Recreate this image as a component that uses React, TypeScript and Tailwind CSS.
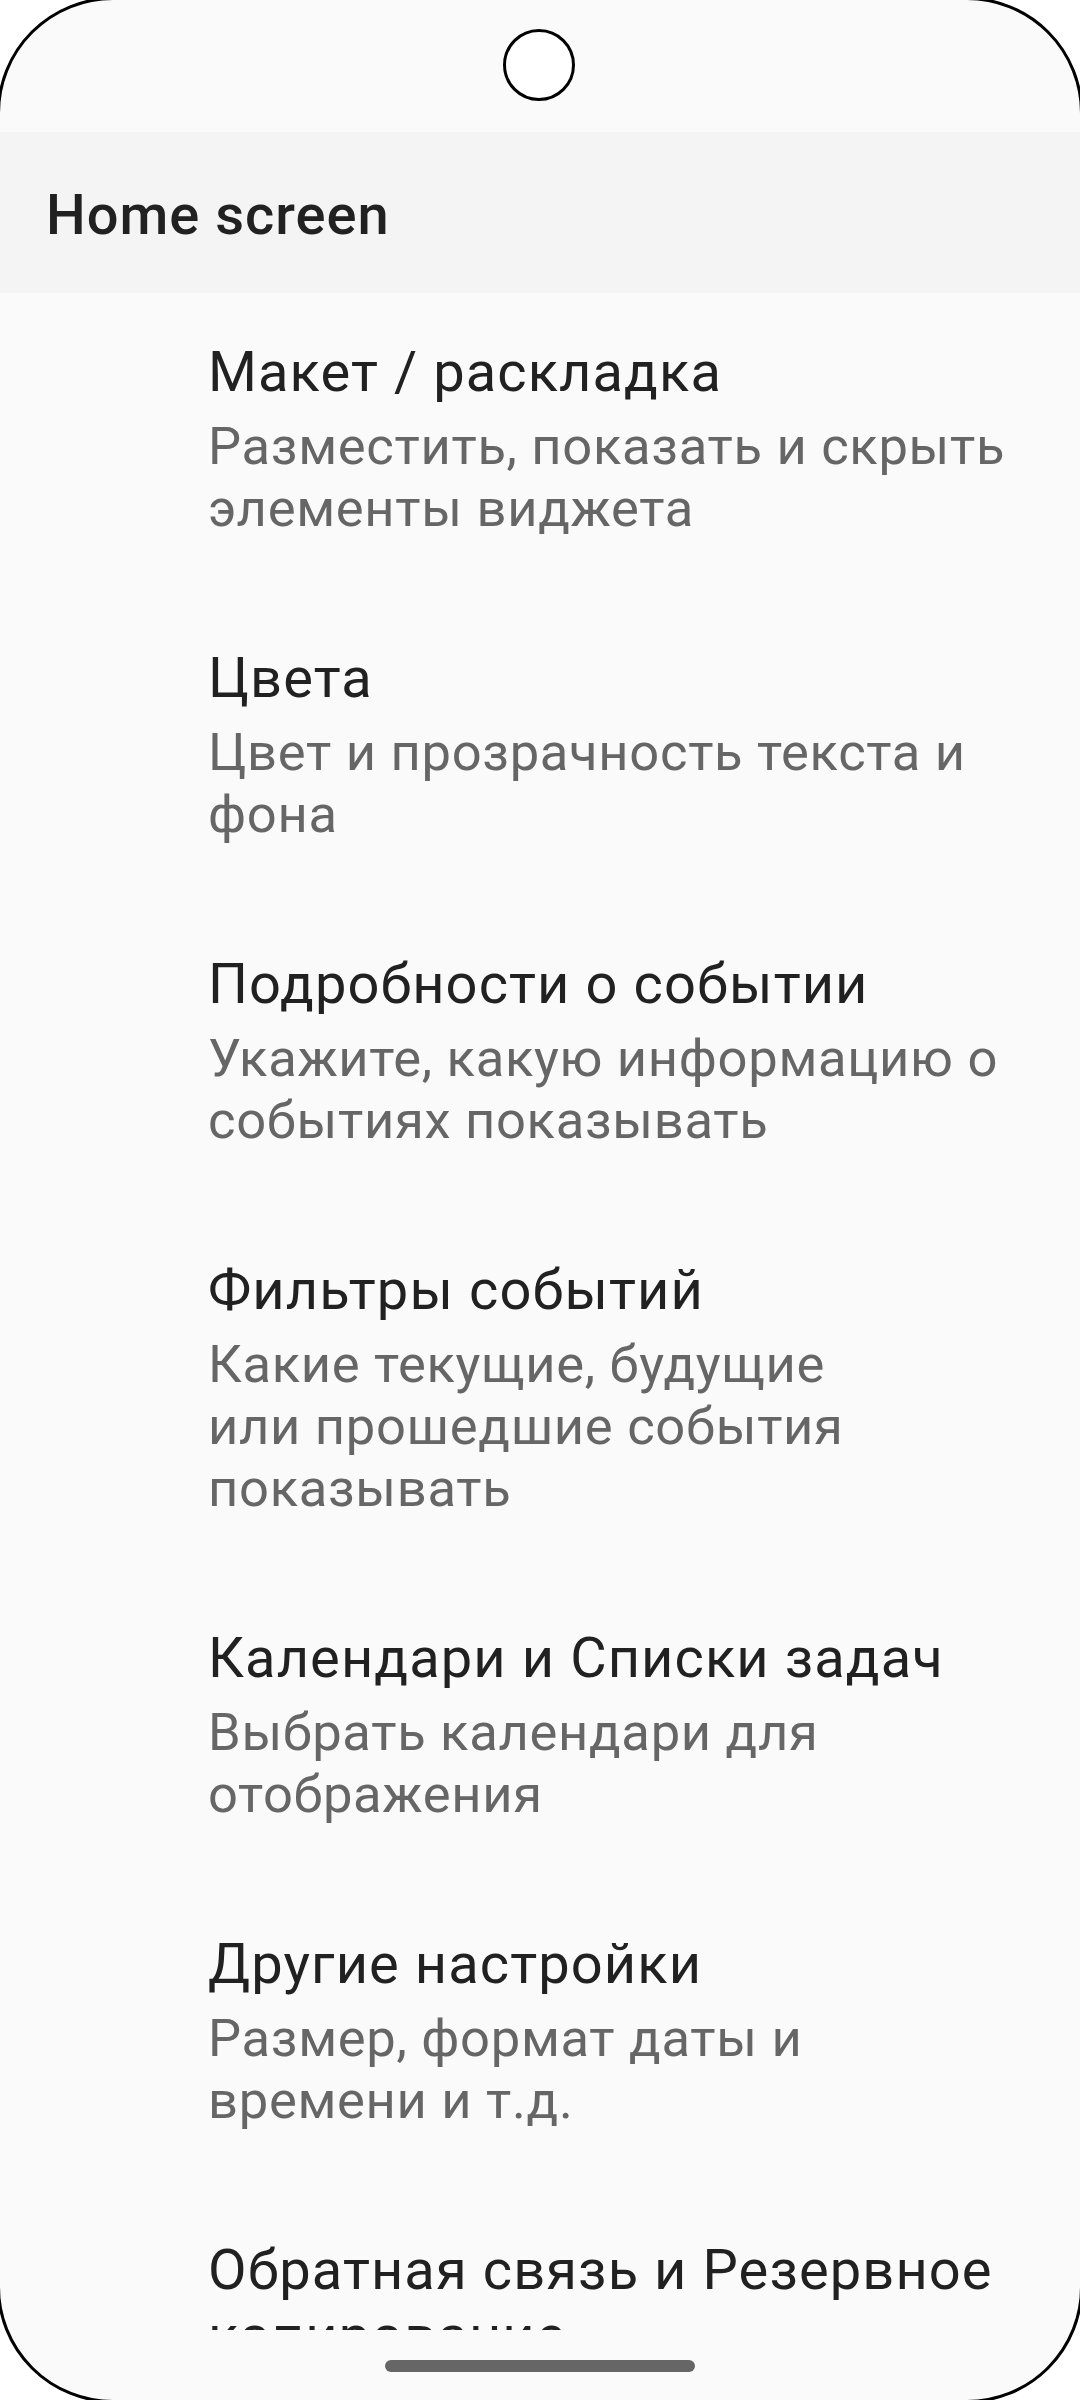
import React from "react";

type Item = { title: string[]; sub: string[] };

const items: Item[] = [
  { title: ["Макет / раскладка"], sub: ["Разместить, показать и скрыть", "элементы виджета"] },
  { title: ["Цвета"], sub: ["Цвет и прозрачность текста и", "фона"] },
  { title: ["Подробности о событии"], sub: ["Укажите, какую информацию о", "событиях показывать"] },
  { title: ["Фильтры событий"], sub: ["Какие текущие, будущие", "или прошедшие события", "показывать"] },
  { title: ["Календари и Списки задач"], sub: ["Выбрать календари для", "отображения"] },
  { title: ["Другие настройки"], sub: ["Размер, формат даты и", "времени и т.д."] },
  { title: ["Обратная связь и Резервное", "копирование"], sub: ["Сохранение и восстановление", "настроек"] },
];

export default function App() {
  return (
    <div className="w-[1080px] h-[2400px] overflow-hidden bg-white" style={{ fontFamily: "Roboto, 'Noto Sans', sans-serif" }}>
      <div className="-m-[3px] w-[1086px] h-[2406px] rounded-[116px] border-[3px] border-black bg-[#fafafa] overflow-hidden flex flex-col">
        {/* status bar with camera */}
        <div className="h-[132px] flex justify-center pt-[29px] shrink-0">
          <div className="w-[72px] h-[72px] rounded-full border-[3px] border-black bg-white ml-[-2px]" />
        </div>
        {/* header */}
        <div className="h-[161px] bg-[#f4f4f4] pl-[46px] pt-[50px] shrink-0">
          <div className="text-[56px] leading-[66px] font-medium tracking-[1px] text-[#212121]">Home screen</div>
        </div>
        {/* list */}
        <div className="h-[2037px] overflow-hidden shrink-0">
          {items.map((it, i) => (
            <div key={i} className="pl-[208px] pr-[38px] pt-[46px] pb-[60px]">
              <div className="text-[56px] leading-[66px] tracking-[1.1px] text-[#212121]">
                {it.title.map((l, j) => (
                  <div key={j} className="whitespace-nowrap">{l}</div>
                ))}
              </div>
              <div className="mt-[10px] text-[52.5px] leading-[62px] tracking-[0.7px] text-[#666666]">
                {it.sub.map((l, j) => (
                  <div key={j} className="whitespace-nowrap">{l}</div>
                ))}
              </div>
            </div>
          ))}
        </div>
        {/* nav bar */}
        <div className="flex-1 flex justify-center pt-[30px]">
          <div className="w-[310px] h-[12px] rounded-full bg-[#666666]" />
        </div>
      </div>
    </div>
  );
}
